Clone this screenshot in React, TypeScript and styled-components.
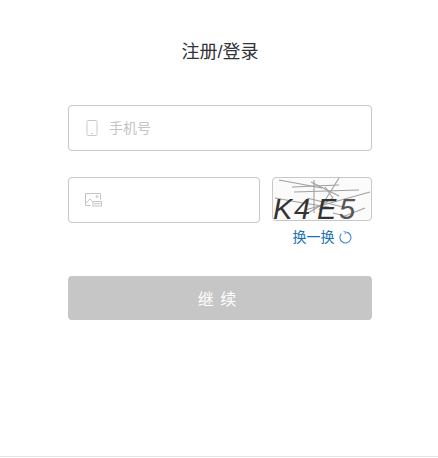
import React from "react";
import styled, { createGlobalStyle } from "styled-components";

const Global = createGlobalStyle`
  html, body { margin: 0; padding: 0; background: #fff; }
  * { box-sizing: border-box; }
  body { font-family: "Liberation Sans", "Noto Sans CJK SC", sans-serif; }
`;

const Page = styled.main`
  width: 438px;
  height: 457px;
  padding: 0 66px 0 68px;
  background: #fff;
  border-bottom: 1px solid #e4e4e4;
`;

const Title = styled.h1`
  margin: 0;
  padding-top: 40px;
  height: 105px;
  font-size: 18px;
  line-height: 24px;
  font-weight: 400;
  text-align: center;
  color: #2f3338;
`;

const Form = styled.form`
  display: flex;
  flex-direction: column;
  width: 304px;
`;

const Field = styled.label<{ $width?: number }>`
  display: flex;
  align-items: center;
  width: ${(p) => (p.$width ? `${p.$width}px` : "100%")};
  height: 46px;
  padding-left: 17px;
  gap: 11px;
  border: 1px solid #c8c8c8;
  border-radius: 4px;
  background: #fff;
`;

const Input = styled.input`
  flex: 1;
  min-width: 0;
  border: 0;
  outline: 0;
  padding: 0;
  font-size: 14px;
  font-family: inherit;
  color: #333;
  background: transparent;
  &::placeholder { color: #c4c4c4; opacity: 1; }
`;

const CaptchaRow = styled.div`
  display: flex;
  justify-content: space-between;
  margin-top: 26px;
`;

const CaptchaColumn = styled.div`
  display: flex;
  flex-direction: column;
  align-items: center;
  width: 100px;
`;

const CaptchaFrame = styled.div`
  width: 100px;
  height: 44px;
  border: 1px solid #c8c8c8;
  border-radius: 4px;
  background: #fbfbfb;
  line-height: 0;
`;

const Refresh = styled.a`
  display: flex;
  align-items: center;
  gap: 4px;
  margin-top: 7px;
  font-size: 14px;
  line-height: 18px;
  color: #1c6fb8;
  cursor: pointer;
`;

const Submit = styled.button`
  width: 304px;
  height: 44px;
  margin-top: 30px;
  padding: 0 5px 0 0;
  border: 0;
  border-radius: 4px;
  background: #c6c6c6;
  color: #fff;
  font-family: inherit;
  font-size: 16px;
  letter-spacing: 1px;
`;

const PhoneIcon = () => (
  <svg width="12" height="16" viewBox="0 0 12 16" fill="none" stroke="#c9c9c9" strokeWidth="1">
    <rect x="1" y="0.5" width="10" height="15" rx="1" />
    <path d="M5 13.5h2" />
  </svg>
);

const ImageIcon = () => (
  <svg width="17" height="14" viewBox="0 0 17 14" fill="none" stroke="#c4c4c4" strokeWidth="1" style={{ marginLeft: -1 }}>
    <path d="M5.5 12.5H.5V.5h15v6" />
    <path d="M1 10l4-4 3 3" />
    <circle cx="12" cy="3.5" r="1" />
    <rect x="8" y="8.5" width="8.5" height="4.5" />
    <path d="M9 10.7h6.5" />
  </svg>
);

const RefreshIcon = () => (
  <svg width="13" height="13" viewBox="0 0 13 13" fill="none" stroke="#3f88d4" strokeWidth="1.1">
    <path d="M7.6 1.1a5.5 5.5 0 1 1-5.2 1.6" />
    <path d="M4.6 .5 7.2 1.2 5.6 3.2" strokeWidth="0.9" />
  </svg>
);

const noise = [
  "M6 2 L49 10", "M19 9 L66 7", "M21 14 L86 12", "M2 20 L30 25 L56 29",
  "M41 2 L41 35", "M66 0 L46 32", "M32 32 L97 14", "M52 9 L60 20",
  "M74 30 L34 20", "M38 4 L66 18", "M30 38 L60 20", "M60 35 L72 38 L92 30",
];

const Captcha = () => (
  <svg width="98" height="42" viewBox="0 0 98 42" overflow="visible">
    <g stroke="#8a8a8a" strokeWidth="1.1" fill="none" opacity="0.8">
      {noise.map((d) => <path key={d} d={d} />)}
    </g>
    <text y="41" fontFamily="'Liberation Sans', sans-serif" fontStyle="italic" fontSize="29" fill="#333">
      <tspan x="0">K</tspan>
      <tspan x="21">4</tspan>
      <tspan x="44">E</tspan>
      <tspan x="66" fill="#555">5</tspan>
    </text>
  </svg>
);

export default function App() {
  return (
    <>
      <Global />
      <Page>
        <Title>注册/登录</Title>
        <Form onSubmit={(e) => e.preventDefault()}>
          <Field>
            <PhoneIcon />
            <Input placeholder="手机号" />
          </Field>
          <CaptchaRow>
            <Field $width={192}>
              <ImageIcon />
              <Input />
            </Field>
            <CaptchaColumn>
              <CaptchaFrame><Captcha /></CaptchaFrame>
              <Refresh>换一换 <RefreshIcon /></Refresh>
            </CaptchaColumn>
          </CaptchaRow>
          <Submit type="button">继 续</Submit>
        </Form>
      </Page>
    </>
  );
}
